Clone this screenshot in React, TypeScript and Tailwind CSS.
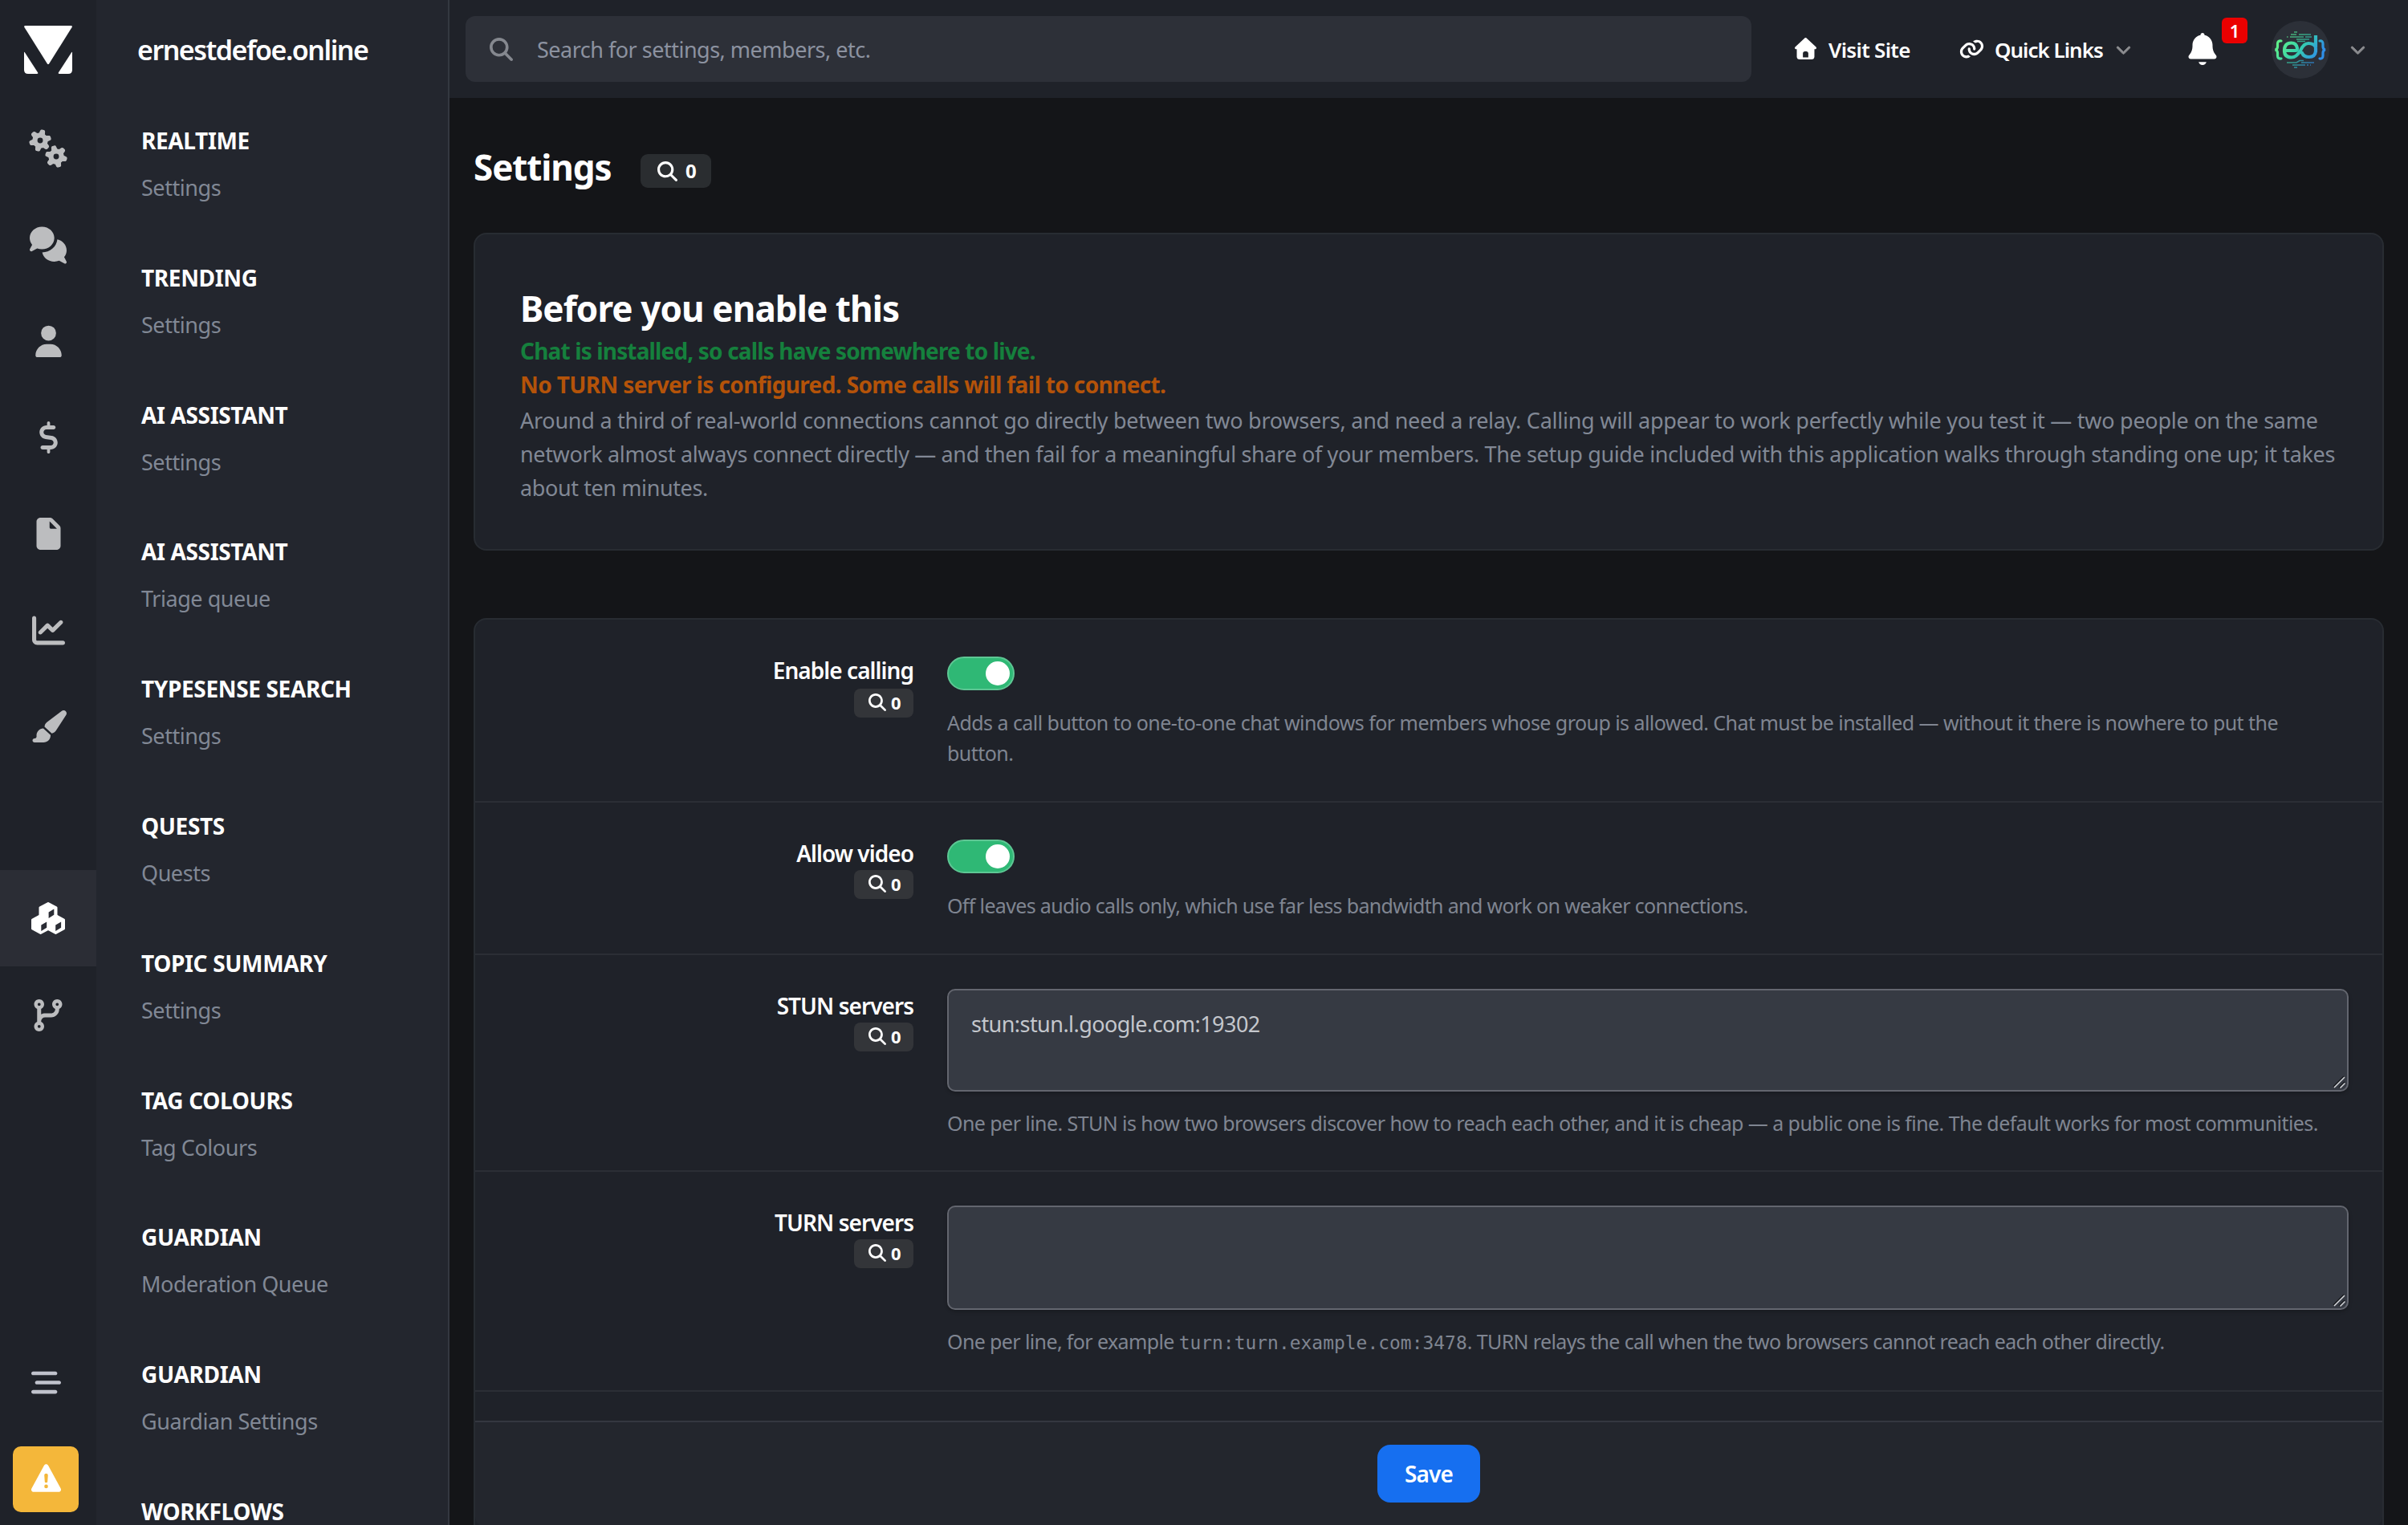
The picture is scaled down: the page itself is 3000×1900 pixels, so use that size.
import clsx from 'clsx'
import { FC, ReactNode } from 'react'
import {
  FaBarsStaggered,
  FaChartLine,
  FaChevronDown,
  FaCodeBranch,
  FaMagnifyingGlass,
  FaPaintbrush,
} from 'react-icons/fa6'

const Glyph: FC<{ viewBox: string; d: string; className?: string }> = ({ viewBox, d, className }) => (
  <svg viewBox={viewBox} fill="currentColor" className={clsx('shrink-0 overflow-visible', className)}>
    <path d={d} />
  </svg>
)

const GEARS =
  'M415.9 210.5c12.2-3.3 25 2.5 30.5 13.8L465 261.9c10.3 1.4 20.4 4.2 29.9 8.1l35-23.3c10.5-7 24.4-5.6 33.3 3.3l19.2 19.2c8.9 8.9 10.3 22.9 3.3 33.3l-23.3 34.9c1.9 4.7 3.6 9.6 5 14.7 1.4 5.1 2.3 10.1 3 15.2l37.7 18.6c11.3 5.6 17.1 18.4 13.8 30.5l-7 26.2c-3.3 12.1-14.6 20.3-27.2 19.5l-42-2.7c-6.3 8.1-13.6 15.6-21.9 22l2.7 41.9c.8 12.6-7.4 24-19.5 27.2l-26.2 7c-12.2 3.3-24.9-2.5-30.5-13.8l-18.6-37.6c-10.3-1.4-20.4-4.2-29.9-8.1l-35 23.3c-10.5 7-24.4 5.6-33.3-3.3l-19.2-19.2c-8.9-8.9-10.3-22.8-3.3-33.3l23.3-35c-1.9-4.7-3.6-9.6-5-14.7s-2.3-10.2-3-15.2l-37.7-18.6c-11.3-5.6-17-18.4-13.8-30.5l7-26.2c3.3-12.1 14.6-20.3 27.2-19.5l41.9 2.7c6.3-8.1 13.6-15.6 21.9-22l-2.7-41.8c-.8-12.6 7.4-24 19.5-27.2l26.2-7zM448.4 340a44 44 0 1 0 .1 88 44 44 0 1 0 -.1-88zM224.9-45.5l26.2 7c12.1 3.3 20.3 14.7 19.5 27.2l-2.7 41.8c8.3 6.4 15.6 13.8 21.9 22l42-2.7c12.5-.8 23.9 7.4 27.2 19.5l7 26.2c3.2 12.1-2.5 24.9-13.8 30.5l-37.7 18.6c-.7 5.1-1.7 10.2-3 15.2s-3.1 10-5 14.7l23.3 35c7 10.5 5.6 24.4-3.3 33.3L307.3 262c-8.9 8.9-22.8 10.3-33.3 3.3L239 242c-9.5 3.9-19.6 6.7-29.9 8.1l-18.6 37.6c-5.6 11.3-18.4 17-30.5 13.8l-26.2-7c-12.2-3.3-20.3-14.7-19.5-27.2l2.7-41.9c-8.3-6.4-15.6-13.8-21.9-22l-42 2.7c-12.5 .8-23.9-7.4-27.2-19.5l-7-26.2c-3.2-12.1 2.5-24.9 13.8-30.5l37.7-18.6c.7-5.1 1.7-10.1 3-15.2 1.4-5.1 3-10 5-14.7L55.1 46.5c-7-10.5-5.6-24.4 3.3-33.3L77.6-6c8.9-8.9 22.8-10.3 33.3-3.3l35 23.3c9.5-3.9 19.6-6.7 29.9-8.1l18.6-37.6c5.6-11.3 18.3-17 30.5-13.8zM192.4 84a44 44 0 1 0 0 88 44 44 0 1 0 0-88z'
const COMMENTS =
  'M384 144c0 97.2-86 176-192 176-26.7 0-52.1-5-75.2-14L35.2 349.2c-9.3 4.9-20.7 3.2-28.2-4.2s-9.2-18.9-4.2-28.2l35.6-67.2C14.3 220.2 0 183.6 0 144 0 46.8 86-32 192-32S384 46.8 384 144zm0 368c-94.1 0-172.4-62.1-188.8-144 120-1.5 224.3-86.9 235.8-202.7 83.3 19.2 145 88.3 145 170.7 0 39.6-14.3 76.2-38.4 105.6l35.6 67.2c4.9 9.3 3.2 20.7-4.2 28.2s-18.9 9.2-28.2 4.2L459.2 498c-23.1 9-48.5 14-75.2 14z'
const USER =
  'M224 248a120 120 0 1 0 0-240 120 120 0 1 0 0 240zm-29.7 56C95.8 304 16 383.8 16 482.3 16 498.7 29.3 512 45.7 512l356.6 0c16.4 0 29.7-13.3 29.7-29.7 0-98.5-79.8-178.3-178.3-178.3l-59.4 0z'
const DOLLAR =
  'M136 24c0-13.3 10.7-24 24-24s24 10.7 24 24l0 40 56 0c17.7 0 32 14.3 32 32s-14.3 32-32 32l-114.9 0c-24.9 0-45.1 20.2-45.1 45.1 0 22.5 16.5 41.5 38.7 44.7l91.6 13.1c53.8 7.7 93.7 53.7 93.7 108 0 60.3-48.9 109.1-109.1 109.1l-10.9 0 0 40c0 13.3-10.7 24-24 24s-24-10.7-24-24l0-40-72 0c-17.7 0-32-14.3-32-32s14.3-32 32-32l130.9 0c24.9 0 45.1-20.2 45.1-45.1 0-22.5-16.5-41.5-38.7-44.7l-91.6-13.1C55.9 273.5 16 227.4 16 173.1 16 112.9 64.9 64 125.1 64l10.9 0 0-40z'
const FILE =
  'M0 64C0 28.7 28.7 0 64 0L213.5 0c17 0 33.3 6.7 45.3 18.7L365.3 125.3c12 12 18.7 28.3 18.7 45.3L384 448c0 35.3-28.7 64-64 64L64 512c-35.3 0-64-28.7-64-64L0 64zm208-5.5l0 93.5c0 13.3 10.7 24 24 24L325.5 176 208 58.5z'
const HOUSE =
  'M277.8 8.6c-12.3-11.4-31.3-11.4-43.5 0l-224 208c-9.6 9-12.8 22.9-8 35.1S18.8 272 32 272l16 0 0 176c0 35.3 28.7 64 64 64l288 0c35.3 0 64-28.7 64-64l0-176 16 0c13.2 0 25-8.1 29.8-20.3s1.6-26.2-8-35.1l-224-208zM240 320l32 0c26.5 0 48 21.5 48 48l0 96-128 0 0-96c0-26.5 21.5-48 48-48z'
const LINK =
  'M419.5 96c-16.6 0-32.7 4.5-46.8 12.7-15.8-16-34.2-29.4-54.5-39.5 28.2-24 64.1-37.2 101.3-37.2 86.4 0 156.5 70 156.5 156.5 0 41.5-16.5 81.3-45.8 110.6l-71.1 71.1c-29.3 29.3-69.1 45.8-110.6 45.8-86.4 0-156.5-70-156.5-156.5 0-1.5 0-3 .1-4.5 .5-17.7 15.2-31.6 32.9-31.1s31.6 15.2 31.1 32.9c0 .9 0 1.8 0 2.6 0 51.1 41.4 92.5 92.5 92.5 24.5 0 48-9.7 65.4-27.1l71.1-71.1c17.3-17.3 27.1-40.9 27.1-65.4 0-51.1-41.4-92.5-92.5-92.5zM275.2 173.3c-1.9-.8-3.8-1.9-5.5-3.1-12.6-6.5-27-10.2-42.1-10.2-24.5 0-48 9.7-65.4 27.1L91.1 258.2c-17.3 17.3-27.1 40.9-27.1 65.4 0 51.1 41.4 92.5 92.5 92.5 16.5 0 32.6-4.4 46.7-12.6 15.8 16 34.2 29.4 54.6 39.5-28.2 23.9-64 37.2-101.3 37.2-86.4 0-156.5-70-156.5-156.5 0-41.5 16.5-81.3 45.8-110.6l71.1-71.1c29.3-29.3 69.1-45.8 110.6-45.8 86.6 0 156.5 70.6 156.5 156.9 0 1.3 0 2.6 0 3.9-.4 17.7-15.1 31.6-32.8 31.2s-31.6-15.1-31.2-32.8c0-.8 0-1.5 0-2.3 0-33.7-18-63.3-44.8-79.6z'
const BELL =
  'M224 0c-17.7 0-32 14.3-32 32l0 3.2C119 50 64 114.6 64 192l0 21.7c0 48.1-16.4 94.8-46.4 132.4L7.8 358.3C2.7 364.6 0 372.4 0 380.5 0 400.1 15.9 416 35.5 416l376.9 0c19.6 0 35.5-15.9 35.5-35.5 0-8.1-2.7-15.9-7.8-22.2l-9.8-12.2C400.4 308.5 384 261.8 384 213.7l0-21.7c0-77.4-55-142-128-156.8l0-3.2c0-17.7-14.3-32-32-32zM162 464c7.1 27.6 32.2 48 62 48s54.9-20.4 62-48l-124 0z'
const WARNING =
  'M256 0c14.7 0 28.2 8.1 35.2 21l216 400c6.7 12.4 6.4 27.4-.8 39.5S486.1 480 472 480L40 480c-14.1 0-27.2-7.4-34.4-19.5s-7.5-27.1-.8-39.5l216-400c7-12.9 20.5-21 35.2-21zm0 352a32 32 0 1 0 0 64 32 32 0 1 0 0-64zm0-192c-18.2 0-32.7 15.5-31.4 33.7l7.4 104c.9 12.5 11.4 22.3 23.9 22.3 12.6 0 23-9.7 23.9-22.3l7.4-104c1.3-18.2-13.1-33.7-31.4-33.7z'

const CubesIcon: FC = () => (
  <svg viewBox="0 0 42 40" className="h-10 w-[42px]">
    <g fill="#fff" stroke="#fff" strokeWidth="3" strokeLinejoin="round">
      <path d="M21 1.5 31 6.8V18L21 23.5 11 18V6.8Z" />
      <path d="M11.6 16.5 21 21.5V33.5L11.6 38.5 1.5 33V22Z" />
      <path d="M30.4 16.5 40.5 22V33L30.4 38.5 21 33.5V21.5Z" />
    </g>
    <g fill="#2b2d35">
      <path d="M21.6 12.6 28.3 8.6V15.8L21.6 20Z" />
      <path d="M12.3 28.6 19.2 24.4V31.8L12.3 36Z" />
      <path d="M30.2 28.6 37.1 24.4V31.8L30.2 36Z" />
    </g>
  </svg>
)

const railItems: { name: string; icon: ReactNode }[] = [
  { name: 'setup', icon: <Glyph viewBox="0 0 640 512" d={GEARS} className="h-10 w-[50px]" /> },
  { name: 'forums', icon: <Glyph viewBox="0 0 576 512" d={COMMENTS} className="h-[41px] w-[46px]" /> },
  { name: 'members', icon: <Glyph viewBox="0 0 448 512" d={USER} className="h-10 w-[35px]" /> },
  { name: 'commerce', icon: <Glyph viewBox="0 0 320 512" d={DOLLAR} className="h-10 w-[25px]" /> },
  { name: 'pages', icon: <Glyph viewBox="0 0 384 512" d={FILE} className="h-10 w-[31px]" /> },
  { name: 'stats', icon: <FaChartLine className="size-[41px]" /> },
  { name: 'theme', icon: <FaPaintbrush className="h-10 w-[45px]" /> },
]

const sections = [
  ['REALTIME', 'Settings'],
  ['TRENDING', 'Settings'],
  ['AI ASSISTANT', 'Settings'],
  ['AI ASSISTANT', 'Triage queue'],
  ['TYPESENSE SEARCH', 'Settings'],
  ['QUESTS', 'Quests'],
  ['TOPIC SUMMARY', 'Settings'],
  ['TAG COLOURS', 'Tag Colours'],
  ['GUARDIAN', 'Moderation Queue'],
  ['GUARDIAN', 'Guardian Settings'],
  ['WORKFLOWS'],
]

const Rail: FC = () => (
  <aside className="flex h-full w-[120px] shrink-0 flex-col items-center bg-[#1f2229] text-[#bcbdbf]">
    <svg viewBox="0 0 60 60" fill="#fff" className="mt-8 size-[60px]">
      <path d="M1.5 0H58.5Q60.5 0 59.6 2L31.2 47.2Q30 49 28.8 47.2L.4 2Q-.5 0 1.5 0Z" />
      <path d="M0 33.6Q0 32 1 33.4L17.2 58.6Q17.9 60 16.2 60H5Q0 60 0 55Z" />
      <path d="M60 33.6Q60 32 59 33.4L42.8 58.6Q42.1 60 43.8 60H55Q60 60 60 55Z" />
    </svg>
    <nav className="mt-8 flex w-full flex-col">
      {railItems.map(({ name, icon }) => (
        <a key={name} className="flex h-[120px] items-center justify-center pt-0.5">
          {icon}
        </a>
      ))}
      <a className="mt-[120px] flex h-[120px] items-center justify-center bg-[#2b2d35]">
        <CubesIcon />
      </a>
      <a className="flex h-[120px] items-center justify-center pt-0.5">
        <FaCodeBranch className="h-10 w-9" />
      </a>
    </nav>
    <div className="mt-auto mr-1.5 mb-4 flex flex-col items-center">
      <FaBarsStaggered className="size-[37px] text-[#c0c2cc]" />
      <div className="mt-[61px] flex h-[82px] w-[82px] items-center justify-center rounded-[10px] bg-[#f4b73a] text-white">
        <Glyph viewBox="0 0 512 480" d={WARNING} className="-mt-1 h-[35px] w-[37px]" />
      </div>
    </div>
  </aside>
)

const SideMenu: FC = () => (
  <aside className="flex h-full w-[440px] shrink-0 flex-col overflow-hidden border-r-2 border-[#343840] bg-[#23262e]">
    <div className="pl-[51px] pt-[38px] text-[34px]/[48px] font-semibold tracking-[-1.5px] text-white">
      ernestdefoe.online
    </div>
    <div className="flex flex-col pt-[71px] pl-14">
      {sections.map(([title, item], i) => (
        <div key={i} className={clsx('shrink-0', item && 'h-[170.8px]')}>
          <div className="text-[28px]/[36px] font-bold tracking-[-0.35px] text-white">{title}</div>
          {item && <div className="mt-5 text-[27px]/[42px] tracking-[-0.45px] text-[#818895]">{item}</div>}
        </div>
      ))}
    </div>
  </aside>
)

const Avatar: FC = () => (
  <div className="flex size-[72px] items-center justify-center rounded-full bg-[#2c3038]">
    <svg viewBox="0 0 72 72" className="size-[72px]" fill="none" strokeLinecap="round">
      <defs>
        <linearGradient id="ed" x1="10" y1="16" x2="60" y2="52" gradientUnits="userSpaceOnUse">
          <stop offset="0.1" stopColor="#5ef08a" />
          <stop offset="0.5" stopColor="#35cfae" />
          <stop offset="0.9" stopColor="#2f8fe8" />
        </linearGradient>
      </defs>
      <g stroke="url(#ed)">
        <path
          strokeWidth="3.2"
          d="M12 25Q7.500 24.500 7.500 28.500V32Q7.500 35.500 4.500 36Q7.500 36.500 7.500 40V43.500Q7.500 47.500 12 47M60 25Q64 24.500 64 28.500V32Q64 35.500 67 36Q64 36.500 64 40V43.500Q64 47.500 60 47"
        />
        <path
          strokeWidth="4.200"
          d="M18 37H30Q32 37 32 34Q31 27.500 24.500 27.500Q16 27.500 16 37Q16 45.500 25 45.500Q31 45.500 36 37Q40 28 46 28Q53 28 55 33V18V38Q54 45 47 45Q40 45 38 40"
        />
        <g strokeWidth="1.600" opacity="0.7" strokeLinecap="butt">
          <path d="M28 14H32M24 17H31M34 17H49M23 20H40M42 20H50M19 20H20.500M31 23H47M32 25.500H42" />
          <path d="M19 52H31L35 49.500H40M37 52H53M26 55H42M44 55H46M48 55H49M28 58H32" />
        </g>
      </g>
    </svg>
  </div>
)

const Header: FC = () => (
  <header className="flex h-[122px] shrink-0 items-center bg-[#1f2229] pl-5 pr-[52px] text-white">
    <div className="flex h-[82px] w-[1602px] items-center rounded-xl bg-[#2d3038] pl-[30px]">
      <FaMagnifyingGlass className="size-[29px] text-[#85888f]" />
      <span className="ml-[30px] mt-px text-[27px]/[42px] tracking-[-0.5px] text-[#8c92a0]">
        Search for settings, members, etc.
      </span>
    </div>
    <Glyph viewBox="0 0 512 512" d={HOUSE} className="ml-[54px] -mt-0.5 size-[27px]" />
    <span className="ml-[15px] mt-0.5 w-[103px] text-[26px]/[40px] font-semibold tracking-[-0.7px] whitespace-nowrap">
      Visit Site
    </span>
    <Glyph viewBox="0 0 576 512" d={LINK} className="ml-[60px] h-[26px] w-[31px]" />
    <span className="ml-[13px] mt-0.5 w-[135px] text-[26px]/[40px] font-semibold tracking-[-1px] whitespace-nowrap">
      Quick Links
    </span>
    <FaChevronDown className="ml-4 size-[19px] stroke-[#8b8c8f] stroke-[24] text-[#8b8c8f]" />
    <div className="relative ml-[71px]">
      <Glyph viewBox="0 0 448 512" d={BELL} className="block h-10 w-9" />
      <span className="absolute -top-[19px] left-[42px] flex size-8 items-center justify-center rounded-md bg-[#eb0000] text-[22px]/8 font-semibold">
        1
      </span>
    </div>
    <div className="ml-[68px] mt-0.5">
      <Avatar />
    </div>
    <FaChevronDown className="ml-[26px] size-[19px] stroke-[#8b8c8f] stroke-[24] text-[#8b8c8f]" />
  </header>
)

const KeywordBadge: FC<{ className?: string }> = ({ className }) => (
  <span
    className={clsx(
      'flex h-9 w-[74px] items-center gap-1.5 rounded-lg bg-[#333539] pl-[18px] text-[22px]/[34px] font-bold text-white',
      className
    )}
  >
    <FaMagnifyingGlass className="-mt-0.5 size-[22px]" />
    <span className="-mt-0.5">0</span>
  </span>
)

const Toggle: FC = () => (
  <div className="flex h-[42px] w-[84px] items-center justify-end rounded-full border-2 border-[#5ec794] bg-[#2fb875] pr-1">
    <div className="size-[30px] rounded-full bg-white" />
  </div>
)

const TextBox: FC<{ value?: string; className: string }> = ({ value, className }) => (
  <div
    className={clsx(
      'relative w-full rounded-[10px] border-2 border-[#63666f] bg-[#363a43] pl-7 pt-[21px] shadow-[0_2px_4px_rgba(0,0,0,0.25)]',
      'text-[27px]/[42px] tracking-[-0.55px] text-[#c4c7cd]',
      className
    )}
  >
    {value}
    <svg viewBox="0 0 16 16" className="absolute right-0.5 bottom-0.5 size-4" strokeWidth="1.5">
      <path stroke="#15171b" d="M1 14 14 1M8 15 15 8" />
      <path stroke="#d5d7da" d="M2 15 15 2M9.500 15.500 15.500 9.500" />
    </svg>
  </div>
)

const Row: FC<{
  label: string
  className: string
  badgeClassName?: string
  helpClassName: string
  control: ReactNode
  children: ReactNode
}> = ({ label, className, badgeClassName, helpClassName, control, children }) => (
  <div className={clsx('flex shrink-0 border-b-2 border-[#2b2e35] pr-[42px]', className)}>
    <div className="flex w-[546px] shrink-0 flex-col items-end pt-[43px]">
      <div className="text-[28px]/[41px] font-semibold tracking-[-0.95px] text-white">{label}</div>
      <KeywordBadge className={badgeClassName} />
    </div>
    <div className="ml-[42px] min-w-0 flex-1">
      {control}
      <div className={clsx('mt-5 text-[25px]/[38px] whitespace-nowrap text-[#7f8591]', helpClassName)}>
        {children}
      </div>
    </div>
  </div>
)

export default function App() {
  return (
    <div className="flex h-[1900px] w-[3000px] overflow-hidden bg-[#141518] font-['Noto_Sans',sans-serif]">
      <Rail />
      <SideMenu />
      <div className="flex min-w-0 flex-1 flex-col">
        <Header />
        <main className="flex flex-1 flex-col pl-[30px] pr-[30px]">
          <div className="flex h-[168px] shrink-0 items-start pt-[54px]">
            <h1 className="w-[208px] text-[44px]/[64px] font-bold tracking-[-1.1px] text-white">Settings</h1>
            <span className="mt-4 flex h-[42px] w-[88px] items-center gap-2.5 rounded-[9px] bg-[#2a2d30] pl-[21px] text-2xl/[42px] font-bold text-white">
              <FaMagnifyingGlass className="size-[25px]" />0
            </span>
          </div>

          <section className="h-[396px] shrink-0 rounded-2xl border-2 border-[#282c32] bg-[#1f2229] pl-14 pt-[60px] text-[28px]/[42px]">
            <h2 className="text-[44px]/[64px] font-bold tracking-[-0.9px] text-white">Before you enable this</h2>
            <p className="font-bold tracking-[-0.85px] text-[#15803d]">
              Chat is installed, so calls have somewhere to live.
            </p>
            <p className="font-bold tracking-[-0.63px] text-[#b45309]">
              No TURN server is configured. Some calls will fail to connect.
            </p>
            <p className="mt-[3px] text-[27px]/[42px] tracking-[-0.4px] whitespace-nowrap text-[#818895]">
              <span className="tracking-[-0.26px]">
                Around a third of real-world connections cannot go directly between two browsers, and need a relay.
                Calling will appear to work perfectly while you test it — two people on the same
              </span>
              <br />
              <span className="tracking-[-0.35px]">
                network almost always connect directly — and then fail for a meaningful share of your members. The
                setup guide included with this application walks through standing one up; it takes
              </span>
              <br />
              about ten minutes.
            </p>
          </section>

          <section className="mt-[84px] flex h-[1200px] shrink-0 flex-col rounded-t-2xl border-2 border-[#282c32] bg-[#1f2229]">
            <Row
              label="Enable calling"
              className="h-[228px]"
              badgeClassName="mt-0.5"
              helpClassName="tracking-[-0.55px]"
              control={<div className="pt-[46px] pb-px"><Toggle /></div>}
            >
              Adds a call button to one-to-one chat windows for members whose group is allowed. Chat must be
              installed — without it there is nowhere to put the
              <br />
              button.
            </Row>
            <Row
              label="Allow video"
              className="h-[190px]"
              helpClassName="tracking-[-0.66px]"
              control={<div className="pt-[46px] pb-px"><Toggle /></div>}
            >
              Off leaves audio calls only, which use far less bandwidth and work on weaker connections.
            </Row>
            <Row
              label="STUN servers"
              className="h-[270px]"
              helpClassName="tracking-[-0.57px]"
              control={<div className="pt-[42px]"><TextBox value="stun:stun.l.google.com:19302" className="h-32" /></div>}
            >
              One per line. STUN is how two browsers discover how to reach each other, and it is cheap — a public
              one is fine. The default works for most communities.
            </Row>
            <Row
              label="TURN servers"
              className="h-[274px]"
              helpClassName="tracking-[-0.62px]"
              control={<div className="pt-[42px]"><TextBox className="h-[130px]" /></div>}
            >
              One per line, for example{' '}
              <code className="font-['DejaVu_Sans_Mono',monospace] text-[22.9px] tracking-[0.03px]">
                turn:turn.example.com:3478
              </code>
              . TURN relays the call when the two browsers cannot reach each other directly.
            </Row>
            <div className="mt-9 flex h-[132px] shrink-0 justify-center rounded-b-xl border-t-2 border-[#343740] bg-[#23262d] pt-7">
              <button className="h-[72px] w-32 rounded-2xl bg-[#166ff0] text-[28px]/[72px] font-semibold tracking-[-0.9px] text-white">
                Save
              </button>
            </div>
          </section>
        </main>
      </div>
    </div>
  )
}
